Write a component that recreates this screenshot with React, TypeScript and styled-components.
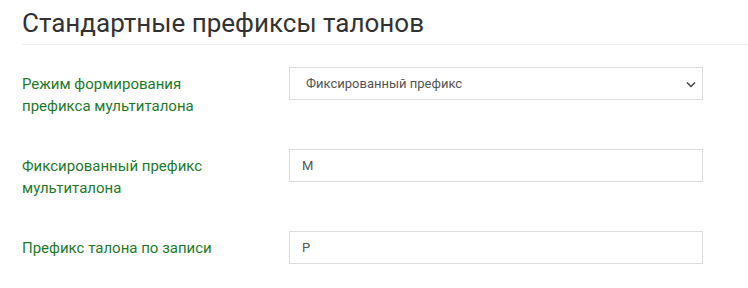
import styled, { createGlobalStyle } from 'styled-components';

const GlobalStyle = createGlobalStyle`
  html, body {
    margin: 0;
    padding: 0;
    background: #ffffff;
  }
  body {
    font-family: Roboto, 'Liberation Sans', sans-serif;
  }
`;

const Page = styled.div`
  width: 748px;
  height: 288px;
  overflow: hidden;
  padding-left: 22px;
  box-sizing: border-box;
`;

const Title = styled.h2`
  margin: 0;
  padding-top: 8px;
  padding-bottom: 6px;
  font-size: 26px;
  font-weight: 400;
  line-height: 30px;
  color: #333333;
  border-bottom: 1px solid #eeeeee;
`;

const Form = styled.form`
  padding-top: 22px;
  display: flex;
  flex-direction: column;
  gap: 32px;
`;

const Row = styled.div`
  display: grid;
  grid-template-columns: 267px 414px;
  align-items: start;
`;

const Label = styled.label`
  font-size: 15px;
  line-height: 22px;
  color: #1f7a2a;
  padding-top: 6px;
`;

const Field = styled.div`
  position: relative;
`;

const Input = styled.input`
  display: block;
  width: 100%;
  height: 33px;
  box-sizing: border-box;
  border: 1px solid #dddddd;
  border-radius: 0;
  padding: 0 12px;
  font-family: Roboto, 'Liberation Sans', sans-serif;
  font-size: 13px;
  color: #555555;
  background: #ffffff;
  outline: none;
`;

const Select = styled.select`
  display: block;
  width: 100%;
  height: 33px;
  box-sizing: border-box;
  border: 1px solid #dddddd;
  border-radius: 0;
  padding: 0 30px 0 16px;
  font-family: Roboto, 'Liberation Sans', sans-serif;
  font-size: 13px;
  color: #555555;
  background: #ffffff;
  appearance: none;
  outline: none;
`;

const Chevron = styled.svg`
  position: absolute;
  right: 7px;
  top: 14px;
  pointer-events: none;
`;

export default function App() {
  return (
    <Page>
      <GlobalStyle />
      <Title>Стандартные префиксы талонов</Title>
      <Form>
        <Row>
          <Label>
            Режим формирования
            <br />
            префикса мультиталона
          </Label>
          <Field>
            <Select defaultValue="fixed">
              <option value="fixed">Фиксированный префикс</option>
            </Select>
            <Chevron width="10" height="7" viewBox="0 0 10 7">
              <path d="M1 1.5 L5 5.5 L9 1.5" fill="none" stroke="#444" strokeWidth="1.5" />
            </Chevron>
          </Field>
        </Row>
        <Row>
          <Label>
            Фиксированный префикс
            <br />
            мультиталона
          </Label>
          <Field>
            <Input defaultValue="М" />
          </Field>
        </Row>
        <Row>
          <Label>Префикс талона по записи</Label>
          <Field>
            <Input defaultValue="Р" />
          </Field>
        </Row>
      </Form>
    </Page>
  );
}
